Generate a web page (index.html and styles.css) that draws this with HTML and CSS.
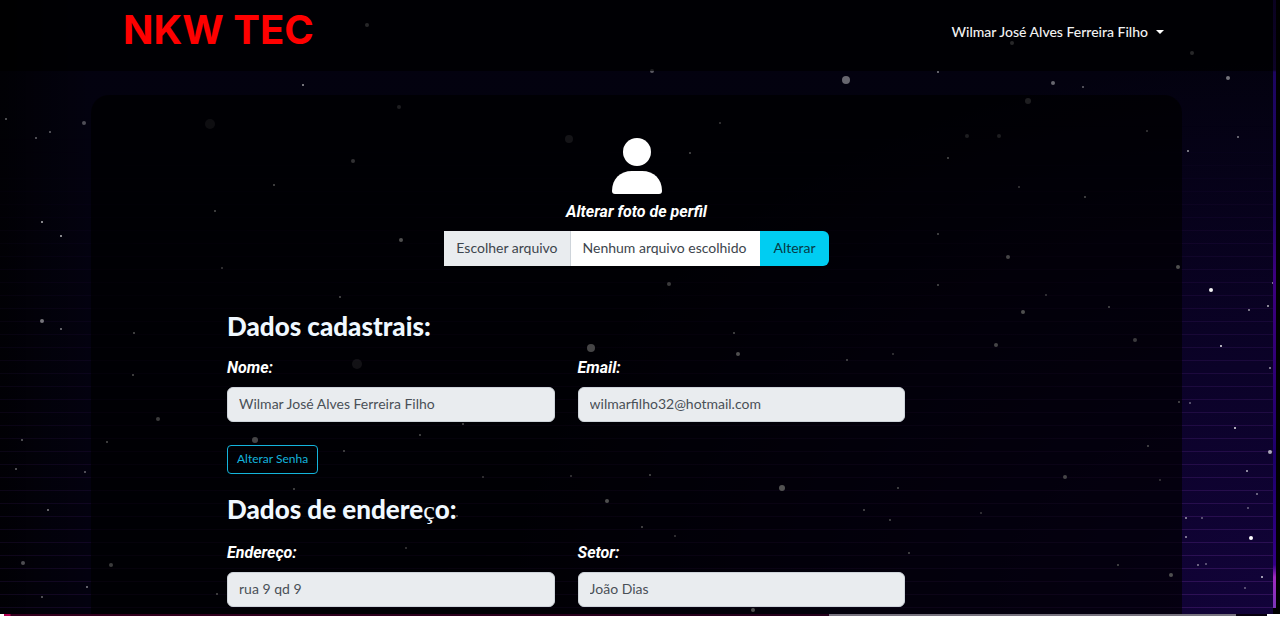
FILE: index.html
```html
<!DOCTYPE html>
<html lang="pt-BR">
<head>
<meta charset="utf-8">
<meta name="viewport" content="width=device-width, initial-scale=1">
<title>NKW TEC</title>
<link rel="stylesheet" href="styles.css">
</head>
<body>
<div class="screen">
  <div class="scene">
    <svg class="sky" viewBox="0 0 1280 618" preserveAspectRatio="xMidYMin slice" aria-hidden="true">
      <g id="stars"></g>
    </svg>
    <div class="page">
      <header class="topbar">
        <a class="brand" href="#">NKW TEC</a>
        <button class="user-menu" type="button">Wilmar José Alves Ferreira Filho<span class="caret"></span></button>
      </header>
      <main class="panel">
        <form class="photo">
          <svg class="avatar" viewBox="0 0 50 56" aria-hidden="true">
            <circle cx="25" cy="14" r="14"/>
            <path d="M3 56Q0 56 0 53C0 41 8 33 20 33H30C42 33 50 41 50 53Q50 56 47 56Z"/>
          </svg>
          <label class="caption" for="foto">Alterar foto de perfil</label>
          <div class="group">
            <label class="file"><input class="file-input" id="foto" type="file"><span class="choose">Escolher arquivo</span><span class="filename">Nenhum arquivo escolhido</span></label>
            <button class="change" type="button">Alterar</button>
          </div>
        </form>
        <section class="section">
          <h2 class="title">Dados cadastrais:</h2>
          <div class="fields">
            <div class="field"><label class="caption" for="nome">Nome:</label><input class="text" id="nome" type="text" value="Wilmar José Alves Ferreira Filho" readonly></div>
            <div class="field"><label class="caption" for="email">Email:</label><input class="text" id="email" type="email" value="wilmarfilho32@hotmail.com" readonly></div>
          </div>
          <button class="password" type="button">Alterar Senha</button>
        </section>
        <section class="section address">
          <h2 class="title">Dados de endere<span class="cedilla">ç</span>o:</h2>
          <div class="fields">
            <div class="field"><label class="caption" for="endereco">Endereço:</label><input class="text" id="endereco" type="text" value="rua 9 qd 9" readonly></div>
            <div class="field"><label class="caption" for="setor">Setor:</label><input class="text" id="setor" type="text" value="João Dias" readonly></div>
          </div>
        </section>
      </main>
    </div>
    <div class="edge"></div>
  </div>
  <div class="strip"><div class="strip-line"></div></div>
</div>
<script src="stars.js"></script>
</body>
</html>
```
FILE: styles.css
```css
* { box-sizing: border-box; }
body { margin: 0; background: #fff; color: #fff; font-family: Lato, "Open Sans", sans-serif; font-size: 14px; }
button, input { font: inherit; }
.screen { display: flex; flex-direction: column; height: 100vh; overflow: hidden; }
.scene {
  position: relative; flex: 1; min-height: 0; display: flex; overflow: hidden;
  background:
    linear-gradient(90deg, rgba(0,0,0,.7) 0, rgba(0,0,0,0) 7%),
    radial-gradient(ellipse 60% 90% at 100% 100%, #12033a 0, #0b0228 45%, rgba(6,1,26,0) 100%),
    linear-gradient(#03020f, #03010f);
}
.scene::before {
  content: ""; position: absolute; inset: 0;
  background: repeating-linear-gradient(0deg, transparent 0 6px, #4c2078 6px 7px, transparent 7px 13px);
  -webkit-mask-image: linear-gradient(90deg, rgba(0,0,0,.2), rgba(0,0,0,.5)), linear-gradient(transparent 20%, #000 95%);
  mask-image: linear-gradient(90deg, rgba(0,0,0,.2), rgba(0,0,0,.5)), linear-gradient(transparent 20%, #000 95%);
  -webkit-mask-composite: source-in;
  mask-composite: intersect;
}
.sky { position: absolute; inset: 0; width: 100%; height: 100%; fill: #fff; }
.page { position: relative; flex: 1; min-width: 0; }
.edge { position: relative; width: 7px; border-right: 4px solid #000; background: linear-gradient(#0a0220 0, #0d0328 70px, #1c0560 72px, #200668 35%, #3c0080 45%, #320078 58%, #1c006c 75%, #34008a 92%, #a02ac0 94%, #7b35b8 99%, #000 99%); }
.topbar { height: 71px; padding: 0 109px 0 123px; display: flex; justify-content: space-between; align-items: flex-start; background: rgba(0,0,0,.68); }
.brand { color: #f00; font-family: Inter, sans-serif; font-size: 40px; line-height: 46px; font-weight: 700; text-decoration: none; margin-top: 7px; }
.user-menu { display: flex; align-items: center; gap: 8px; margin-top: 21px; padding: 0; border: 0; background: none; color: #f2f2f2; font-weight: 500; line-height: 22px; }
.caret { border: 4px solid transparent; border-top-color: #fff; border-bottom: 0; }
.panel { margin: 24px 91px 0; padding: 43px 136px 60px; border-radius: 18px 18px 0 0; background: rgba(0,0,0,.68); }
.photo { display: flex; flex-direction: column; align-items: center; }
.avatar { width: 50px; height: 56px; fill: #fff; margin-bottom: 7px; }
.caption { display: block; font-family: Roboto, sans-serif; font-size: 16px; line-height: 22px; font-weight: 700; font-style: italic; margin-bottom: 8px; }
.group { display: flex; height: 35px; line-height: 34px; }
.file { position: relative; display: flex; background: #fff; color: #3d454d; }
.file-input { position: absolute; inset: 0; width: 100%; opacity: 0; }
.choose { padding: 0 12px; background: #e9ecef; border-right: 1px solid #ced4da; }
.filename { padding: 0 14px 0 12px; }
.change { padding: 0 13px 2px; border: 0; border-radius: 0 6px 6px 0; background: #00cdf2; color: #063a46; }
.section { margin-top: 44px; }
.address { margin-top: 19px; }
.title { margin: 0 0 15px; font-family: Lato, sans-serif; font-size: 26px; line-height: 32px; font-weight: 900; color: #f0f8ff; }
.cedilla { font-family: "Liberation Serif", serif; font-weight: 400; }
.fields { display: grid; grid-template-columns: 40% 40%; gap: 23px; }
.text { display: block; width: 100%; height: 35px; padding: 0 11px 2px; border: 1px solid #ced4da; border-radius: 6px; background: #e9ecef; color: #495057; }
.password { display: block; height: 29px; margin-top: 23px; padding: 0 9px 2px; border: 1px solid #14b4dc; border-radius: 4px; background: none; color: #14b4dc; font-size: 12px; }
.strip { height: 4px; }
.strip-line { height: 2px; background: linear-gradient(90deg, #fff 4px, #b00050 4px 10px, #35001f 11px, #25001c 829px, #77727f 829px 1236px, #08000f 1236px 1267px, #fff 1267px); }
```
FILE: stars.js
```js
// x, y, radius, brightness
const stars = [
  [367,25,2,.2],[1012,43,2,.2],[1192,53,2,.2],[652,71,2,.35],[846,80,4,.4],[1053,83,2,.4],[1228,78,2,.45],
  [303,85,1,.6],[938,72,1,.5],[1083,87,1,.4],[84,123,2,.3],[50,132,1,.4],[36,138,1,.4],[6,119,1,.4],[210,124,5,.07],
  [569,139,4,.1],[1028,101,3,.15],[399,107,2,.15],[353,161,2,.25],[720,123,1,.3],[690,153,1,.4],[967,136,2,.15],
  [999,136,2,.15],[948,158,1,.4],[1147,131,1,.3],[1188,151,1,.6],[1238,137,1,.5],[274,185,1,.4],[215,211,1,.4],
  [401,240,2,.4],[42,222,1,.7],[61,236,1,.7],[1019,187,1,.3],[1085,197,1,.4],[938,234,1,.4],[1008,257,2,.35],
  [1178,267,2,.4],[669,284,2,.3],[340,297,1,.5],[222,268,1,.3],[938,285,1,.4],[1046,295,1,.3],[1211,290,2,.95],
  [1023,312,2,.4],[42,321,2,.45],[61,329,1,.5],[134,333,1,.5],[734,333,1,.4],[591,348,4,.35],[738,354,2,.4],
  [996,345,2,.35],[1221,346,1,.9],[1268,306,1,.7],[1249,310,1,.6],[1273,283,1,.6],[1135,340,2,.3],[1109,307,1,.4],
  [357,364,5,.09],[133,375,1,.4],[847,360,1,.4],[893,354,1,.3],[158,419,2,.3],[255,440,3,.35],[22,440,1,.4],
  [107,442,1,.4],[16,469,1,.4],[85,472,1,.4],[1235,428,1,.9],[1270,368,1,.6],[1179,402,1,.5],[1190,403,1,.4],
  [420,435,1,.4],[463,424,1,.4],[344,451,1,.4],[1065,477,2,.35],[782,488,3,.45],[607,501,2,.4],[650,475,1,.4],
  [48,510,1,.5],[898,488,1,.4],[864,510,1,.5],[1247,471,1,.7],[1270,452,2,.65],[1148,446,1,.4],[1257,494,1,.5],
  [1186,518,1,.6],[1202,518,1,.4],[1248,508,1,.4],[294,489,1,.4],[642,527,1,.5],[457,516,1,.4],[1251,538,2,1],
  [1186,537,1,.6],[23,563,2,.3],[111,565,2,.3],[87,587,1,.5],[1171,575,2,.4],[1198,565,1,.5],[1206,564,1,.4],
  [1262,577,1,.8],[1245,588,1,.4],[753,610,2,.4],[42,597,1,.4],[217,594,1,.4],[909,553,1,.4],[981,513,1,.3],
  [1118,565,1,.4],[890,520,1,.4],[406,548,1,.3],[483,477,1,.3],[571,476,1,.3],[675,536,1,.3],[1160,480,1,.3]
];
const ns = "http://www.w3.org/2000/svg";
const layer = document.getElementById("stars");
for (const [x, y, r, o] of stars) {
  // Stars behind the dark header and panel shine brighter to stay visible.
  const covered = y < 71 || (x > 91 && x < 1183 && y > 95);
  const c = document.createElementNS(ns, "circle");
  c.setAttribute("cx", x);
  c.setAttribute("cy", y);
  c.setAttribute("r", r);
  c.setAttribute("opacity", covered ? Math.min(1, o * 2.4) : o);
  layer.append(c);
}
```
